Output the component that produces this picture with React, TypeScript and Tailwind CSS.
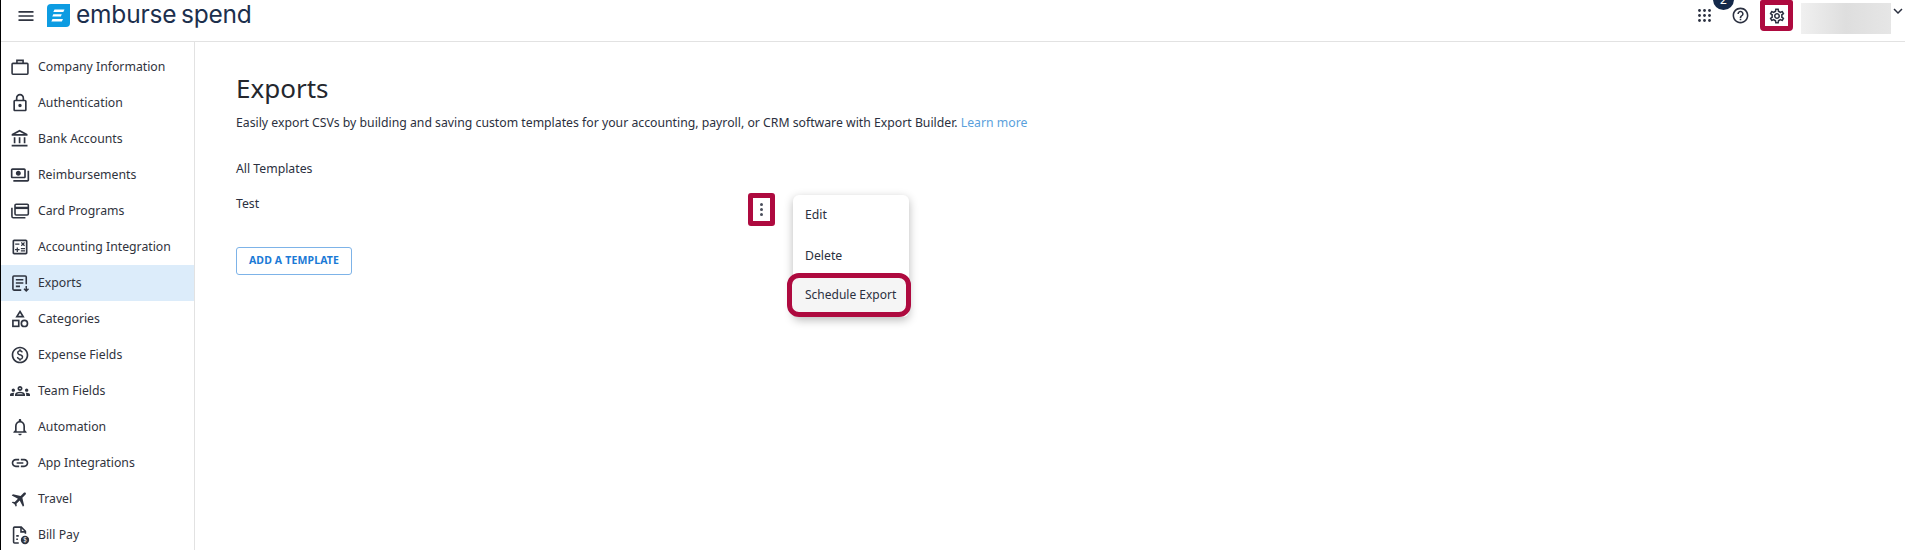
import React from 'react';
import {
  MdMenu,
  MdHelpOutline,
  MdOutlineSettings,
  MdExpandMore,
  MdOutlineLock,
  MdOutlineAccountBalance,
  MdOutlinePayments,
  MdOutlineCalculate,
  MdOutlinePaid,
  MdOutlineGroups,
  MdOutlineNotifications,
  MdOutlineLink,
  MdFlight,
} from 'react-icons/md';

const BriefcaseIcon = () => (
  <svg viewBox="0 0 24 24" className="w-5 h-5" fill="none" stroke="currentColor" strokeWidth="1.9">
    <rect x="2.500" y="7.600" width="19" height="13" rx="1" />
    <path d="M8.300 7.600V4h7.400v3.600" />
  </svg>
);

const CardsIcon = () => (
  <svg viewBox="0 0 24 24" className="w-5 h-5" fill="none" stroke="currentColor" strokeWidth="1.9">
    <rect x="6" y="3.800" width="16" height="13" rx="1.400" />
    <path d="M6 8.300h16" strokeWidth="2.800" />
    <path d="M2.300 8v10.200c0 1 .7 1.800 1.700 1.800h14.500" />
  </svg>
);

const ExportsIcon = () => (
  <svg viewBox="0 0 24 24" className="w-5 h-5" fill="none" stroke="currentColor" strokeWidth="1.900">
    <path d="M13.500 20.500H4.700c-.7 0-1.200-.5-1.200-1.200V4.700c0-.7.500-1.200 1.200-1.200h13.600c.7 0 1.200.5 1.200 1.200v8.800" />
    <path d="M7 8h9M7 12h9M7 16h5" />
    <path d="M19.500 15.500v6M16.800 19l2.700 2.700 2.700-2.700" strokeWidth="1.700" />
  </svg>
);

const CategoriesIcon = () => (
  <svg viewBox="0 0 24 24" className="w-5 h-5" fill="none" stroke="currentColor" strokeWidth="2">
    <path d="M12 3l3.800 6.200H8.200z" />
    <rect x="3.500" y="13.800" width="7" height="7" />
    <circle cx="17.300" cy="17.300" r="3.700" />
  </svg>
);

const BillPayIcon = () => (
  <svg viewBox="0 0 24 24" className="w-5 h-5" fill="none" stroke="currentColor" strokeWidth="1.900">
    <path d="M10.500 21.500H5.500c-.7 0-1.200-.5-1.200-1.200V3.700c0-.7.500-1.200 1.200-1.200h8l5 5v3" />
    <path d="M13.200 2.500v5.700h5.300" />
    <path d="M7.500 13h3M7.500 17h2" />
    <circle cx="18" cy="18" r="5" fill="currentColor" stroke="none" />
    <text x="18" y="20.800" fontSize="7.500" fill="#fff" stroke="none" textAnchor="middle" fontFamily="'Noto Sans', sans-serif">$</text>
  </svg>
);

const AppsIcon = () => (
  <svg viewBox="0 0 13 13" className="w-[13px] h-[13px]" fill="currentColor">
    {[1.5, 6.5, 11.5].map((y) =>
      [1.5, 6.5, 11.5].map((x) => <circle key={`${x}-${y}`} cx={x} cy={y} r="1.400" />),
    )}
  </svg>
);

const LogoMark = () => (
  <svg viewBox="0 0 23 23" className="w-[23px] h-[23px]">
    <path d="M4 0h19v19a4 4 0 0 1-4 4H0V4a4 4 0 0 1 4-4z" fill="#0d9ce2" />
    <path d="M7.500 5.500h10l-1.200 2.500H6.300zM6.300 10.300h8.500l-1 2.300H5.300zM5.500 15h10.500l-1.200 2.500H4.300z" fill="#fff" />
  </svg>
);

const navItems = [
  { label: 'Company Information', icon: <BriefcaseIcon /> },
  { label: 'Authentication', icon: <MdOutlineLock size={20} /> },
  { label: 'Bank Accounts', icon: <MdOutlineAccountBalance size={20} /> },
  { label: 'Reimbursements', icon: <MdOutlinePayments size={20} /> },
  { label: 'Card Programs', icon: <CardsIcon /> },
  { label: 'Accounting Integration', icon: <MdOutlineCalculate size={20} /> },
  { label: 'Exports', icon: <ExportsIcon />, active: true },
  { label: 'Categories', icon: <CategoriesIcon /> },
  { label: 'Expense Fields', icon: <MdOutlinePaid size={20} /> },
  { label: 'Team Fields', icon: <MdOutlineGroups size={20} /> },
  { label: 'Automation', icon: <MdOutlineNotifications size={20} /> },
  { label: 'App Integrations', icon: <MdOutlineLink size={20} /> },
  { label: 'Travel', icon: <MdFlight size={22} className="rotate-45" /> },
  { label: 'Bill Pay', icon: <BillPayIcon /> },
];

const App = () => {
  return (
    <div className="w-[1905px] h-[550px] overflow-hidden flex flex-col bg-white border-l border-l-black font-['Noto_Sans',sans-serif] text-[12.25px] text-[#2b3040]">
      <header className="h-[42px] shrink-0 flex items-start border-b border-[#e2e2e2]">
        <div className="flex items-center pl-[17px] pt-[4px] gap-[13px]">
          <MdMenu size={16} className="text-[#2f3440] scale-125" />
          <div className="flex items-center gap-[6px]">
            <LogoMark />
            <span className="font-['Inter',sans-serif] text-[24.5px] leading-[20px] pb-[3px] text-[#1c2f4d] tracking-[-0.2px] [word-spacing:-2px]">emburse spend</span>
          </div>
        </div>
        <div className="ml-auto flex items-start">
          <div className="text-[#2b3040] mt-[9px] mr-[20px]"><AppsIcon /></div>
          <div className="relative mt-[6px] mr-[10px]">
            <MdHelpOutline size={19} className="text-[#2b3040]" />
            <span className="absolute left-[-18px] top-[-17px] w-[21px] h-[21px] rounded-full bg-[#14294a] text-white text-[12px] flex items-center justify-center">2</span>
          </div>
          <div className="w-[33px] h-[31px] rounded-b-[4px] rounded-t-[2px] border-[5px] border-[#ae0a3f] flex items-center justify-center mr-[8px]">
            <MdOutlineSettings size={18} className="text-[#2b3040]" />
          </div>
          <div className="w-[90px] h-[31px] mt-[3px] bg-gradient-to-r from-[#f0f0f0] via-[#dedede] to-[#e6e6e6]" />
          <div className="w-[14px] mt-[2px] flex justify-center"><MdExpandMore size={18} className="text-[#2b3040] shrink-0" /></div>
        </div>
      </header>

      <div className="flex flex-1 min-h-0">
        <nav className="w-[194px] shrink-0 border-r border-[#e2e2e2] pt-[7px] overflow-hidden">
          {navItems.map((item) => (
            <div
              key={item.label}
              className={`h-9 flex items-center gap-[8px] pl-[9px] ${item.active ? 'bg-[#dcecfa]' : ''}`}
            >
              <span className="w-5 h-5 flex items-center justify-center text-[#2f3440]">{item.icon}</span>
              <span className="text-[#30333d]">{item.label}</span>
            </div>
          ))}
        </nav>

        <main className="flex-1 pl-[41px]">
          <h1 className="text-[26px] leading-[36px] mt-[28px] text-[#24272e]">Exports</h1>
          <p className="leading-[18px] mt-[8px]">
            Easily export CSVs by building and saving custom templates for your accounting, payroll, or CRM software with Export Builder.{' '}
            <span className="text-[#5a9fdc]">Learn more</span>
          </p>
          <div className="leading-[18px] mt-[28px]">All Templates</div>
          <div className="relative w-[539px] h-[33px] mt-[17px]">
            <div className="leading-[18px]">Test</div>
            <div className="absolute left-[512px] top-[-2px] w-[27px] h-[33px] rounded-[3px] border-[5px] border-[#ae0a3f] flex flex-col items-center justify-center gap-[2px]">
              <span className="w-[3px] h-[3px] rounded-full bg-[#4a4f5c]" />
              <span className="w-[3px] h-[3px] rounded-full bg-[#4a4f5c]" />
              <span className="w-[3px] h-[3px] rounded-full bg-[#4a4f5c]" />
            </div>
            <div className="absolute left-[557px] top-0 w-[116px] h-[122px] bg-white rounded-[6px] shadow-[0_3px_10px_rgba(0,0,0,0.28)]">
              <div className="h-[41px] flex items-center pl-[12px]">Edit</div>
              <div className="h-[41px] flex items-center pl-[12px]">Delete</div>
              <div className="absolute left-[-6px] top-[78px] w-[124px] h-[44px] rounded-[12px] border-[5px] border-[#ae0a3f] bg-[#f5f5f5] flex items-center pl-[13px] text-[12px] whitespace-nowrap">Schedule Export</div>
            </div>
          </div>
          <button className="mt-[19px] w-[116px] h-[28px] rounded-[3px] border border-[#7db3e8] text-[#1b7ad6] text-[10.5px] font-bold tracking-[0.15px] flex items-center justify-center">
            ADD A TEMPLATE
          </button>
        </main>
      </div>
    </div>
  );
};

export default App;
